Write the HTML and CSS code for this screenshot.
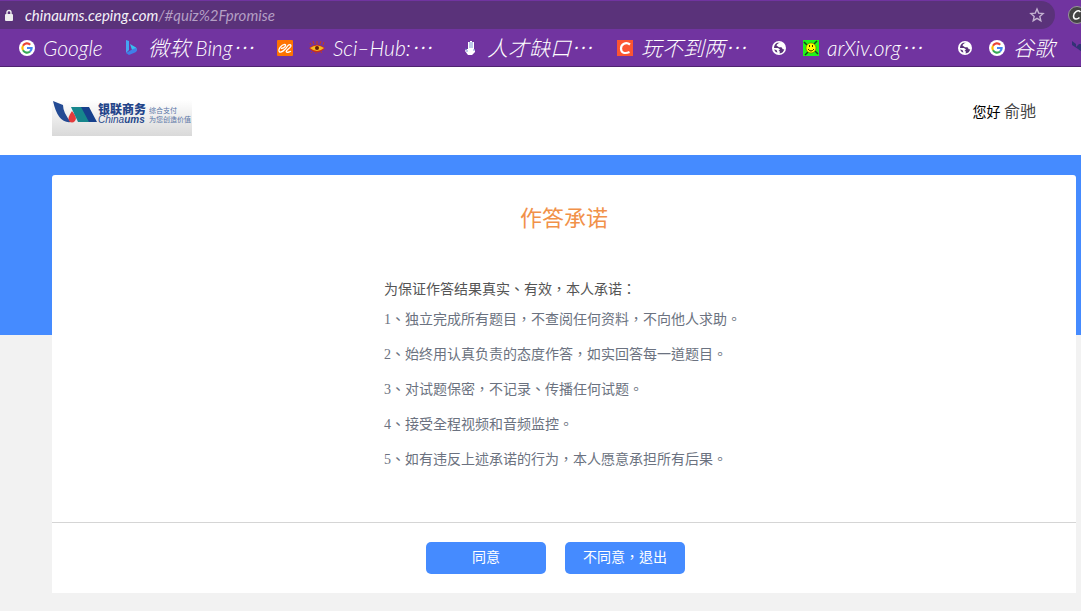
FILE: index.html
```html
<!DOCTYPE html>
<html lang="zh-TW">
<head>
<meta charset="utf-8">
<title>作答承诺</title>
<link rel="stylesheet" href="styles.css">
</head>
<body>
<svg class="defs" aria-hidden="true">
  <symbol id="google" viewBox="0 0 16 16">
    <circle cx="8" cy="8" r="8" fill="#fff"/>
    <g fill="none" stroke-width="2.2">
      <path d="M4 5.7A4.6 4.6 0 0 1 11.2 4.7" stroke="#ea4335"/>
      <path d="M4 10.3A4.6 4.6 0 0 1 4 5.7" stroke="#fbbc05"/>
      <path d="M11 11.5A4.6 4.6 0 0 1 4 10.3" stroke="#34a853"/>
      <path d="M8 8H12.6A4.6 4.6 0 0 1 11 11.5" stroke="#4285f4"/>
    </g>
  </symbol>
  <symbol id="globe" viewBox="0 0 16 16">
    <circle cx="8" cy="8" r="7" fill="#fff"/>
    <path d="M9.500 2.800Q6 3.200 5.500 5.500L8 7.200h2.500L12 9.500l1.300-.5Q12.500 13 8.500 13.500L9 11.500 7.500 11l1.500-1.500-2-1.500H3Q3 4 6.500 2.700zM3 9.500l2.500.5 1 2.500Q4 12 3 9.500z" fill="#59317a"/>
  </symbol>
</svg>
<header class="browser" lang="zh-CN">
  <div class="address-row">
    <div class="address">
      <svg class="lock" viewBox="0 0 10 13"><path d="M3 6V3.5a2 2 0 0 1 4 0V6" fill="none" stroke="#eee" stroke-width="1.4"/><rect x="1" y="5" width="8" height="7" rx="1" fill="#eee"/></svg>
      <span class="url">chinaums.ceping.com<span class="path">/#quiz%2Fpromise</span></span>
      <svg class="star" viewBox="0 0 16 16"><path d="M8 2l1.700 4.100 4.400.4-3.300 2.900 1 4.300L8 11.400l-3.800 2.300 1-4.300-3.300-2.900 4.400-.4z" fill="none" stroke="#c4b3d1" stroke-width="1.4"/></svg>
    </div>
    <svg class="extension" viewBox="0 0 18 18"><circle cx="9" cy="9" r="8.5" fill="#444" stroke="#999"/><path d="M12.5 6C10 3 5.500 6.500 5.500 10c0 4 4 3.500 6 1.500" fill="none" stroke="#fff" stroke-width="1.5"/></svg>
  </div>
  <nav class="bookmarks">
    <a href="#"><svg><use href="#google"/></svg><span class="short">Google</span></a>
    <a href="#"><svg viewBox="0 0 16 16"><path d="M2 0l3 1v9l-3 3z" fill="#45a4f3"/><path d="M6 4l6 3.500q2 3-1 4l-3-1.500z" fill="#35c1f1"/><path d="M2 13l7-4 3-1q2 3-1 4.500L5 15z" fill="#3f7fe8"/></svg><span class="bing">微软 Bing⋯</span></a>
    <a href="#" aria-label="阿里"><svg viewBox="0 0 16 16"><rect width="16" height="16" rx="1" fill="#ff7300"/><path d="M4 8.500c4-.5 6-4 3.500-4.200C4.500 4.500 1 9.500 2.200 11.500c1.500 2 6.500-2 8-5 1.500-2.500 4.500-2.500 3.500 0-1 2-4.700 3.500-4.500 5 .3 1.300 3 .8 4.800-.2" fill="none" stroke="#fff" stroke-width="1.300"/></svg></a>
    <a href="#"><svg viewBox="0 0 16 16"><path d="M2 5L1 3m4 1L4 1m4 3V1m3 3l1-3m2 4l1-3M3 12l-1 1m5 0v1m5-2l1 1" stroke="#c33c22"/><path d="M0 8q8-7 16 0-8 9-16 0z" fill="#c9321d"/><path d="M1 8q7-5 14 0-7 6-14 0z" fill="#f5ba21"/><circle cx="8" cy="8" r="2" fill="#642009"/></svg><span class="long">Sci–Hub:⋯</span></a>
    <a href="#"><svg viewBox="0 0 16 16"><path d="M5 9V2h2V1h2v1h2v8l1-1v3l-3 3H5l-3-4 1-2z" fill="#fff"/><path d="M7 2v6M9 2v6M2 8l2 2v2M11 9v2" fill="none" stroke="#4369c2" stroke-width=".7"/></svg><span class="long">人才缺口⋯</span></a>
    <a href="#"><svg viewBox="0 0 16 16"><rect width="16" height="16" fill="#fc5531"/><path d="M13 4.500C9 1.500 4 4 4 8.500s4 5.500 8.500 3.500" fill="none" stroke="#fff" stroke-width="2.200"/></svg><span class="long">玩不到两⋯</span></a>
    <a href="#" aria-label="网页"><svg><use href="#globe"/></svg></a>
    <a href="#"><svg viewBox="0 0 16 16"><rect width="16" height="16" fill="#20f51c"/><path d="M1 2l3 3M14 1l-3 3M2 15l3-3M15 14l-3-3" stroke="#16461c" stroke-width="1.500"/><circle cx="8" cy="8" r="5" fill="#ff0" stroke="#785800" stroke-width=".6"/><path d="M6.500 5v2m3-2v2M5 9q3 4 6 0" stroke="#332800" fill="none"/></svg><span class="long">arXiv.org⋯</span></a>
    <a href="#" aria-label="网页"><svg><use href="#globe"/></svg></a>
    <a href="#"><svg><use href="#google"/></svg><span class="tiny">谷歌</span></a>
    <a href="#" aria-label="更多"><svg viewBox="0 0 16 16"><path d="M1 1l4 3v3l3-3h3v8L7 9 1 5z" fill="#323276"/></svg></a>
  </nav>
</header>
<div class="page">
  <header class="site-header" lang="zh-CN">
    <div class="logo">
      <svg class="mark" viewBox="0 0 44 23"><path d="M0 0l10 4q0 8 8 17-13 2-18-21z" fill="#244b94"/><path d="M19 10q6 7 3 10-3 3-6 0-2-3 3-10z" fill="#e33b3c"/><path d="M18 6h12l7 15H25z" fill="#16868c"/><path d="M28 6h8l8 15h-8z" fill="#16408c"/></svg>
      <div class="brand"><span>银联商务</span><span class="latin">China<b>ums</b></span></div>
      <svg class="slogan" viewBox="0 0 42 19" role="img" aria-label="综合支付 为您创造价值"><text x="0" y="8">综合支付</text><text x="0" y="17">为您创造价值</text></svg>
    </div>
    <div class="user">您好 <span>俞驰</span></div>
  </header>
  <div class="stage">
    <main class="card">
      <h1 lang="zh-CN">作答承诺</h1>
      <section class="promise">
        <p class="lead">为保证作答结果真实、有效，本人承诺：</p>
        <p>1、独立完成所有题目，不查阅任何资料，不向他人求助。</p>
        <p>2、始终用认真负责的态度作答，如实回答每一道题目。</p>
        <p>3、对试题保密，不记录、传播任何试题。</p>
        <p>4、接受全程视频和音频监控。</p>
        <p>5、如有违反上述承诺的行为，本人愿意承担所有后果。</p>
      </section>
      <div class="actions">
        <button type="button">同意</button>
        <button type="button">不同意，退出</button>
      </div>
    </main>
  </div>
</div>
</body>
</html>
```
FILE: styles.css
```css
* { box-sizing: border-box; }
body {
  margin: 0;
  min-height: 100vh;
  overflow-x: hidden;
  background: #f2f2f2;
  font: 14px/20px "Liberation Serif", "Noto Sans CJK TC", sans-serif;
}
.defs { position: absolute; width: 0; height: 0; }
.browser {
  background: #7134a0;
  border-bottom: 1px solid #4e2370;
  padding-top: 1px;
  overflow: hidden;
}
.address-row { display: flex; gap: 13px; }
.address {
  flex: 1;
  display: flex;
  align-items: center;
  height: 28px;
  padding: 0 10px 0 4px;
  background: #5a327a;
  border-radius: 0 14px 14px 0;
}
.lock { width: 10px; height: 13px; margin-right: 11px; }
.url {
  flex: 1;
  color: #f4f0f7;
  font: italic 15px/20px Lato, sans-serif;
}
.path { color: #b49fc4; }
.star { width: 16px; height: 16px; }
.extension { flex: none; width: 18px; height: 18px; margin: 5px -5px 0 0; }
.bookmarks {
  display: flex;
  gap: 16px;
  height: 37px;
  padding-left: 19px;
}
.bookmarks a {
  flex: none;
  display: flex;
  align-items: center;
  gap: 8px;
  color: #fff;
  text-decoration: none;
  white-space: nowrap;
  font: italic 300 21px/28px Lato, "Noto Sans CJK SC", sans-serif;
}
.bookmarks svg { width: 16px; height: 16px; }
.short { width: 65px; }
.bing { width: 113px; }
.long { width: 114px; }
.tiny { width: 42px; }
.site-header {
  display: flex;
  justify-content: space-between;
  height: 88px;
  padding: 33px 45px 0 52px;
  background: #fff;
}
.logo {
  display: flex;
  width: 140px;
  height: 36px;
  padding: 1px;
  background: linear-gradient(#fff, #d9d9d9);
  color: #24458a;
}
.mark { width: 44px; height: 23px; }
.brand {
  display: flex;
  flex-direction: column;
  width: 50px;
  padding: 2px 0 0 1px;
  font: 900 12px/12px "Noto Sans CJK SC", sans-serif;
  white-space: nowrap;
}
.latin { font: italic 10px/10px "Liberation Sans", sans-serif; }
.slogan {
  width: 42px;
  height: 19px;
  margin: 4px 0 0 2px;
  fill: #5874a5;
  font: 7px "Noto Sans CJK SC", sans-serif;
}
.user { line-height: 24px; color: #000; }
.user span { font-size: 16px; color: #444; }
.stage {
  padding: 20px 5px 18px 52px;
  background: linear-gradient(#458bff, #458bff) top / 100% 180px no-repeat;
}
.card { background: #fff; border-radius: 3px 3px 0 0; }
h1 {
  margin: 0;
  padding: 28px 0 43px;
  text-align: center;
  color: #f19149;
  font-size: 22px;
  font-weight: 400;
  line-height: 32px;
}
.promise {
  width: 360px;
  margin: 0 auto;
  padding-bottom: 45px;
  color: #6b7280;
}
.promise p { margin: 0; line-height: 35px; white-space: nowrap; }
.promise .lead { padding-bottom: 1px; line-height: 23px; color: #555; }
.actions {
  display: flex;
  justify-content: center;
  gap: 19px;
  padding: 19px 17px 19px 0;
  border-top: 1px solid #d5d5d5;
}
.actions button {
  width: 120px;
  height: 32px;
  padding: 0;
  border: 0;
  border-radius: 5px;
  background: #458bff;
  color: #fff;
  font: inherit;
}
```
